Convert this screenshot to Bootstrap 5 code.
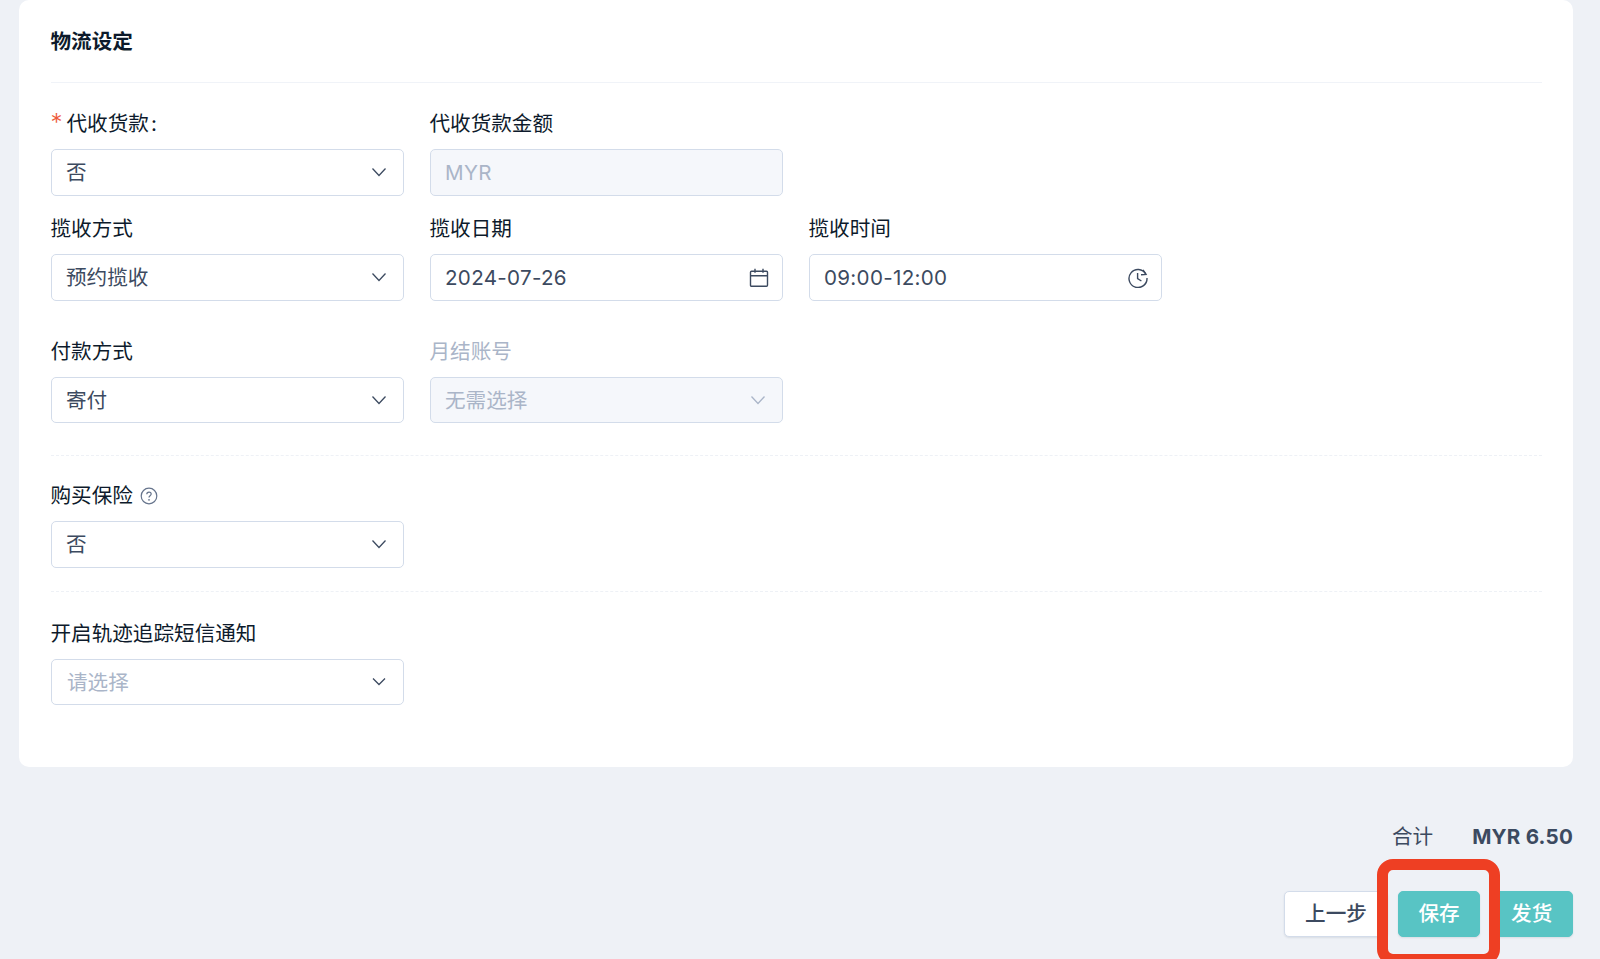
<!DOCTYPE html>
<html lang="zh-CN">
<head>
<meta charset="utf-8">
<title>物流设定</title>
<link href="https://cdn.jsdelivr.net/npm/bootstrap@5.3.0/dist/css/bootstrap.min.css" rel="stylesheet">
<style>
html, body { height: 959px; overflow: hidden; }
body { background: #eef1f6; font-family: Inter, "Noto Sans CJK SC", sans-serif; font-size: 20.6px; color: #3c4a60; }
.page-wrap { padding: 0 27px 0 19px; }
.panel { background: #fff; border-radius: 10px; height: 767px; padding: 0 31px 0 31.5px; }
.panel-head { height: 83px; border-bottom: 1px solid #f0f3f8; padding-top: 27px; font-weight: 700; line-height: 30px; color: #0d1a2b; }
.field-row { display: flex; gap: 25.5px; }
.row-a { margin-top: 24.3px; }
.row-b { margin-top: 16.6px; }
.row-c { margin-top: 34px; }
.row-d { margin-top: 23.7px; }
.row-e { margin-top: 24.3px; }
.field-box { width: 353.5px; }
.field-label { display: block; height: 30px; line-height: 33px; margin-bottom: 12px; color: #0d1a2b; font-size: 20.6px; }
.field-label.is-off { color: #aab5c8; }
.req-star { color: #ee5a3a; margin-right: 4px; font-size: 24px; font-weight: 300; line-height: 1; }
.colon-mark { margin-left: 2px; }
.ctl-wrap { position: relative; height: 46.4px; }
.ctl-wrap .form-control, .ctl-wrap .form-select {
  height: 46.4px; padding: 0 44px 0 14.5px; font-size: 20.6px; color: #3c4a60;
  border: 1px solid #d3dcea; border-radius: 5px; background-image: none; line-height: 44px;
}
.ctl-wrap .form-select { padding-top: 1px; }
.ctl-wrap .form-control { letter-spacing: .3px; }
.ctl-wrap .form-control:disabled, .ctl-wrap .form-select:disabled { background-color: #f5f7fb; color: #aab5c8; opacity: 1; }
.ctl-wrap .is-empty { color: #aab5c8; padding-left: 15.5px; }
.ctl-icon { position: absolute; pointer-events: none; color: #3c4a60; fill: none; stroke: currentColor; }
.ico-chev { right: 17px; top: 16px; width: 16px; height: 14px; stroke-width: 1.3; }
.ico-cal { right: 14.5px; top: 14px; width: 20px; height: 20px; stroke-width: 1.4; }
.ico-off { color: #aab5c8; }
.help-ico { width: 18px; height: 18px; margin-left: 7px; vertical-align: -2px; color: #66748c; fill: none; stroke: currentColor; }
.dash-line { border-top: 1px dashed #eef1f6; }
.dash-one { margin-top: 31.6px; }
.dash-two { margin-top: 23.6px; }
.total-row { display: flex; justify-content: flex-end; gap: 39px; margin-top: 55px; height: 30px; line-height: 30px; }
.total-sum { font-weight: 700; letter-spacing: .2px; }
.action-row { display: flex; justify-content: flex-end; gap: 10px; margin-top: 39px; }
.act-btn { height: 46.4px; padding: 0 19.75px; font-size: 20.6px; font-weight: 500; border-radius: 5px; line-height: 44px; border: 1px solid transparent; box-shadow: 0 1px 2px rgba(60,74,96,.12); }
.act-plain, .act-plain:hover { background: #fff; border-color: #d3dcea; color: #3c4a60; }
.act-teal, .act-teal:hover { background: #58c4c4; border-color: #58c4c4; color: #fff; }
.save-holder { position: relative; }
.red-mark { position: absolute; left: -21px; right: -20px; top: -32px; bottom: -28px; border: 11px solid #ee3f23; border-radius: 16px; pointer-events: none; }
</style>
</head>
<body>
<div class="page-wrap">
  <div class="panel">
    <div class="panel-head">物流设定</div>

    <div class="field-row row-a">
      <div class="field-box">
        <label class="field-label"><span class="req-star">*</span>代收货款<span class="colon-mark">:</span></label>
        <div class="ctl-wrap">
          <select class="form-select"><option>否</option></select>
          <svg class="ctl-icon ico-chev" viewBox="0 0 16 14"><path d="M1.5 3.5 8 10.5l6.5-7"/></svg>
        </div>
      </div>
      <div class="field-box">
        <label class="field-label">代收货款金额</label>
        <div class="ctl-wrap"><input class="form-control" type="text" value="MYR" disabled></div>
      </div>
    </div>

    <div class="field-row row-b">
      <div class="field-box">
        <label class="field-label">揽收方式</label>
        <div class="ctl-wrap">
          <select class="form-select"><option>预约揽收</option></select>
          <svg class="ctl-icon ico-chev" viewBox="0 0 16 14"><path d="M1.5 3.5 8 10.5l6.5-7"/></svg>
        </div>
      </div>
      <div class="field-box">
        <label class="field-label">揽收日期</label>
        <div class="ctl-wrap">
          <input class="form-control" type="text" value="2024-07-26">
          <svg class="ctl-icon ico-cal" viewBox="0 0 20 20"><rect x="1.5" y="3.2" width="17" height="15" rx="1"/><path d="M1.5 7.8h17M6 .8v4M14 .8v4"/></svg>
        </div>
      </div>
      <div class="field-box">
        <label class="field-label">揽收时间</label>
        <div class="ctl-wrap">
          <input class="form-control" type="text" value="09:00-12:00">
          <svg class="ctl-icon ico-cal" viewBox="0 0 20 20"><path d="M17.8 6A9 9 0 1 0 19 10"/><path d="M15 1.8l3 4.6-5 .4M9.6 5v5.6l3.8 2.4"/></svg>
        </div>
      </div>
    </div>

    <div class="field-row row-c">
      <div class="field-box">
        <label class="field-label">付款方式</label>
        <div class="ctl-wrap">
          <select class="form-select"><option>寄付</option></select>
          <svg class="ctl-icon ico-chev" viewBox="0 0 16 14"><path d="M1.5 3.5 8 10.5l6.5-7"/></svg>
        </div>
      </div>
      <div class="field-box">
        <label class="field-label is-off">月结账号</label>
        <div class="ctl-wrap">
          <select class="form-select" disabled><option>无需选择</option></select>
          <svg class="ctl-icon ico-chev ico-off" viewBox="0 0 16 14"><path d="M1.5 3.5 8 10.5l6.5-7"/></svg>
        </div>
      </div>
    </div>

    <div class="dash-line dash-one"></div>

    <div class="field-row row-d">
      <div class="field-box">
        <label class="field-label">购买保险<svg class="help-ico" viewBox="0 0 18 18"><circle cx="9" cy="9" r="7.8" stroke-width="1.2"/><path d="M6.8 7.2c0-1.3 1-2.1 2.2-2.1s2.2.8 2.2 2c0 1.7-2.2 1.7-2.2 3.4" stroke-width="1.2"/><circle cx="9" cy="12.9" r=".5" stroke-width="1"/></svg></label>
        <div class="ctl-wrap">
          <select class="form-select"><option>否</option></select>
          <svg class="ctl-icon ico-chev" viewBox="0 0 16 14"><path d="M1.5 3.5 8 10.5l6.5-7"/></svg>
        </div>
      </div>
    </div>

    <div class="dash-line dash-two"></div>

    <div class="field-row row-e">
      <div class="field-box">
        <label class="field-label">开启轨迹追踪短信通知</label>
        <div class="ctl-wrap">
          <select class="form-select is-empty"><option>请选择</option></select>
          <svg class="ctl-icon ico-chev" viewBox="0 0 16 14"><path d="M2 3.5 8 9.5l6-6"/></svg>
        </div>
      </div>
    </div>
  </div>

  <div class="total-row">
    <span>合计</span>
    <span class="total-sum">MYR 6.50</span>
  </div>
  <div class="action-row">
    <button type="button" class="btn act-btn act-plain">上一步</button>
    <div class="save-holder">
      <button type="button" class="btn act-btn act-teal">保存</button>
      <div class="red-mark"></div>
    </div>
    <button type="button" class="btn act-btn act-teal">发货</button>
  </div>
</div>
</body>
</html>
